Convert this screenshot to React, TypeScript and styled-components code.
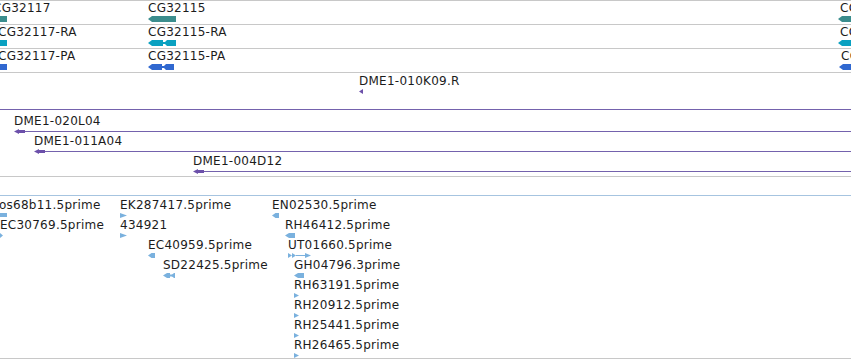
import React from "react"
import styled, { createGlobalStyle } from "styled-components"

const GlobalStyle = createGlobalStyle`
  html, body {
    margin: 0;
    padding: 0;
    background: #fff;
  }
  body {
    font-family: "DejaVu Sans", "Liberation Sans", sans-serif;
  }
`

const TEAL = "#3b8d8d"
const CYAN = "#0aa1c1"
const BLUE = "#3068d0"
const PURPLE = "#6c50aa"
const PURPLE_LINE = "#7462ad"
const EST = "#7ab1de"
const RULE = "#c8c8c8"

const Page = styled.div`
  position: relative;
  width: 851px;
  height: 360px;
  overflow: hidden;
  background: #fff;
`

const GeneTrack = styled.div`
  border-top: 1px solid ${RULE};
`

const GeneRow = styled.div`
  position: relative;
  height: 23px;
  border-bottom: 1px solid ${RULE};
`

const CloneTrack = styled.div`
  padding: 1px 0 2px;
  border-bottom: 1px solid ${RULE};
`

const TrackGap = styled.div`
  height: 18px;
`

const EstTrack = styled.div`
  padding-top: 2px;
  border-top: 1px solid #a6c4e0;
  border-bottom: 1px solid ${RULE};
`

const Row = styled.div`
  position: relative;
  height: 20px;
`

const Feature = styled.div<{ $wide?: boolean }>`
  position: absolute;
  top: 0;
  display: flex;
  flex-direction: column;
  align-items: flex-start;
  ${({ $wide }) => ($wide ? "right: 0;" : "")}
`

const Label = styled.span<{ $shift: number }>`
  display: block;
  height: 14px;
  margin-left: ${({ $shift }) => $shift}px;
  font-size: 12px;
  line-height: 14px;
  letter-spacing: 0.25px;
  color: #1c1c1c;
  white-space: nowrap;
`

const GlyphSlot = styled.div`
  margin-top: 1px;
  display: flex;
  align-items: center;
  align-self: stretch;
  line-height: 0;

  svg {
    display: block;
    flex: none;
  }
`

const Connector = styled.div<{ $color: string }>`
  flex: 1;
  height: 1px;
  background: ${({ $color }) => $color};
`

type Kind =
  | "block"
  | "rev"
  | "revSplit"
  | "revTri"
  | "fwdTri"
  | "fwdChain"
  | "cloneTip"
  | "cloneLine"
  | "none"

type Spec = {
  x: number
  label?: string
  shift?: number
  kind: Kind
  w?: number
  h?: number
}

const revBar = (x0: number, x1: number, h: number, tip = 4) =>
  `${x0},${h / 2} ${x0 + tip},0 ${x1},0 ${x1},${h} ${x0 + tip},${h}`

const Glyph: React.FC<{ spec: Spec; color: string }> = ({ spec, color }) => {
  const w = spec.w ?? 7
  const h = spec.h ?? 5
  switch (spec.kind) {
    case "block":
      return (
        <svg width={w} height={h}>
          <rect x={0} y={0} width={w} height={h} fill={color} />
        </svg>
      )
    case "rev":
      return (
        <svg width={w} height={h}>
          <polygon points={revBar(0, w, h, Math.min(4, w / 2))} fill={color} />
        </svg>
      )
    case "revSplit": {
      const a = Math.round(w * 0.55)
      return (
        <svg width={w} height={h}>
          <polygon points={revBar(0, a, h, 4)} fill={color} />
          <rect x={a} y={h / 2 - 1} width={3} height={2} fill={color} />
          <polygon points={revBar(a + 1, w, h, 3)} fill={color} />
        </svg>
      )
    }
    case "revTri":
      return (
        <svg width={w} height={h}>
          <polygon points={`0,${h / 2} ${w},0 ${w},${h}`} fill={color} />
        </svg>
      )
    case "fwdTri":
      return (
        <svg width={w} height={h}>
          <polygon points={`0,0 ${w},${h / 2} 0,${h}`} fill={color} />
        </svg>
      )
    case "fwdChain":
      return (
        <svg width={w} height={h}>
          <polygon points={`0,0 4,${h / 2} 0,${h}`} fill={color} />
          <polygon points={`4,0 8,${h / 2} 4,${h}`} fill={color} />
          <rect x={8} y={h / 2 - 0.5} width={w - 14} height={1} fill={color} />
          <polygon points={`${w - 6},0 ${w},${h / 2} ${w - 6},${h}`} fill={color} />
        </svg>
      )
    case "cloneTip":
      return (
        <svg width={w} height={h}>
          <polygon points={`0,${h / 2} ${w},0 ${w},${h}`} fill={color} />
        </svg>
      )
    case "cloneLine":
      return (
        <>
          <svg width={11} height={5}>
            <polygon points="0,2.5 5,0 5,1 11,1 11,4 5,4 5,5" fill={color} />
          </svg>
          <Connector $color={PURPLE_LINE} />
        </>
      )
    default:
      return null
  }
}

const FeatureItem: React.FC<{ spec: Spec; color: string; wide?: boolean }> = ({
  spec,
  color,
  wide,
}) => (
  <Feature $wide={wide} style={{ left: spec.x }}>
    <Label $shift={spec.shift ?? 0}>{spec.label ?? ""}</Label>
    <GlyphSlot>
      {spec.kind === "none" ? (
        <Connector $color={PURPLE_LINE} />
      ) : (
        <Glyph spec={spec} color={color} />
      )}
    </GlyphSlot>
  </Feature>
)

const geneRows: { color: string; items: Spec[] }[] = [
  {
    color: TEAL,
    items: [
      { x: 0, shift: -7, label: "CG32117", kind: "block", w: 7, h: 6 },
      { x: 148, label: "CG32115", kind: "rev", w: 28, h: 6 },
      { x: 838, shift: 2, label: "CG32113", kind: "rev", w: 14, h: 6 },
    ],
  },
  {
    color: CYAN,
    items: [
      { x: 0, shift: -2, label: "CG32117-RA", kind: "block", w: 7, h: 6 },
      { x: 148, label: "CG32115-RA", kind: "revSplit", w: 28, h: 6 },
      { x: 838, shift: 2, label: "CG32113-RA", kind: "rev", w: 14, h: 6 },
    ],
  },
  {
    color: BLUE,
    items: [
      { x: 0, shift: -2, label: "CG32117-PA", kind: "block", w: 7, h: 6 },
      { x: 148, label: "CG32115-PA", kind: "revSplit", w: 26, h: 6 },
      { x: 839, shift: 2, label: "CG32113-PA", kind: "rev", w: 13, h: 6 },
    ],
  },
]

const cloneRows: { spec: Spec; wide?: boolean }[] = [
  { spec: { x: 359, label: "DME1-010K09.R", kind: "cloneTip", w: 4, h: 5 } },
  { spec: { x: 0, kind: "none" }, wide: true },
  { spec: { x: 14, label: "DME1-020L04", kind: "cloneLine" }, wide: true },
  { spec: { x: 34, label: "DME1-011A04", kind: "cloneLine" }, wide: true },
  { spec: { x: 193, label: "DME1-004D12", kind: "cloneLine" }, wide: true },
]

const estRows: Spec[][] = [
  [
    { x: 0, shift: -1, label: "os68b11.5prime", kind: "block", w: 7, h: 4 },
    { x: 120, label: "EK287417.5prime", kind: "fwdTri", w: 7, h: 5 },
    { x: 272, label: "EN02530.5prime", kind: "rev", w: 7, h: 5 },
  ],
  [
    { x: 0, label: "EC30769.5prime", kind: "fwdTri", w: 3, h: 5 },
    { x: 120, label: "434921", kind: "fwdTri", w: 7, h: 5 },
    { x: 285, label: "RH46412.5prime", kind: "rev", w: 10, h: 5 },
  ],
  [
    { x: 148, label: "EC40959.5prime", kind: "rev", w: 7, h: 5 },
    { x: 288, label: "UT01660.5prime", kind: "fwdChain", w: 23, h: 5 },
  ],
  [
    { x: 163, label: "SD22425.5prime", kind: "revSplit", w: 12, h: 5 },
    { x: 294, label: "GH04796.3prime", kind: "rev", w: 10, h: 5 },
  ],
  [{ x: 294, label: "RH63191.5prime", kind: "fwdTri", w: 5, h: 5 }],
  [{ x: 294, label: "RH20912.5prime", kind: "fwdTri", w: 5, h: 5 }],
  [{ x: 294, label: "RH25441.5prime", kind: "fwdTri", w: 5, h: 5 }],
  [{ x: 294, label: "RH26465.5prime", kind: "fwdTri", w: 5, h: 5 }],
]

const App: React.FC = () => {
  return (
    <Page>
      <GlobalStyle />
      <GeneTrack>
        {geneRows.map((row, i) => (
          <GeneRow key={i}>
            {row.items.map((spec) => (
              <FeatureItem key={spec.label} spec={spec} color={row.color} />
            ))}
          </GeneRow>
        ))}
      </GeneTrack>
      <CloneTrack>
        {cloneRows.map((row, i) => (
          <Row key={i}>
            <FeatureItem spec={row.spec} color={PURPLE} wide={row.wide} />
          </Row>
        ))}
      </CloneTrack>
      <TrackGap />
      <EstTrack>
        {estRows.map((row, i) => (
          <Row key={i}>
            {row.map((spec) => (
              <FeatureItem key={spec.label} spec={spec} color={EST} />
            ))}
          </Row>
        ))}
      </EstTrack>
    </Page>
  )
}

export default App
